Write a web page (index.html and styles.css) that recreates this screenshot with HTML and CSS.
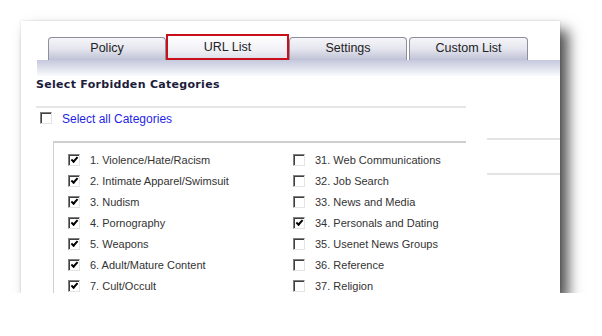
FILE: index.html
```html
<!DOCTYPE html>
<html lang="en">
<head>
    <meta charset="UTF-8">
    <title>URL List</title>
    <link rel="stylesheet" href="styles.css">
</head>
<body>

    <div class="card">
        <div class="tabs">
            <div class="tab">Policy</div>
            <div class="tab active">URL List</div>
            <div class="tab">Settings</div>
            <div class="tab tab-last">Custom List</div>
        </div>
        <div class="strip"></div>

        <div class="body">
            <div class="panel">
                <h2>Select Forbidden Categories</h2>
                <div class="rule"></div>
                <div class="select-all">
                    <span class="cb"></span>
                    <a href="#">Select all Categories</a>
                </div>

                <div class="catbox">
                    <div class="cat"><span class="cb on"></span>1. Violence/Hate/Racism</div>
                    <div class="cat"><span class="cb"></span>31. Web Communications</div>
                    <div class="cat"><span class="cb on"></span>2. Intimate Apparel/Swimsuit</div>
                    <div class="cat"><span class="cb"></span>32. Job Search</div>
                    <div class="cat"><span class="cb on"></span>3. Nudism</div>
                    <div class="cat"><span class="cb"></span>33. News and Media</div>
                    <div class="cat"><span class="cb on"></span>4. Pornography</div>
                    <div class="cat"><span class="cb on"></span>34. Personals and Dating</div>
                    <div class="cat"><span class="cb on"></span>5. Weapons</div>
                    <div class="cat"><span class="cb"></span>35. Usenet News Groups</div>
                    <div class="cat"><span class="cb on"></span>6. Adult/Mature Content</div>
                    <div class="cat"><span class="cb"></span>36. Reference</div>
                    <div class="cat"><span class="cb on"></span>7. Cult/Occult</div>
                    <div class="cat"><span class="cb"></span>37. Religion</div>
                </div>
            </div>

            <div class="side">
                <div class="side-line"></div>
                <div class="side-line"></div>
            </div>
        </div>
    </div>

</body>
</html>
```

FILE: styles.css
```css
body {
    margin: 0;
    padding: 21px 0 0 21px;
    background-color: #fff;
    font-family: 'Liberation Sans', Arial, sans-serif;
}
.card {
    width: 539px;
    height: 272px;
    overflow: hidden;
    background-color: #fff;
    box-shadow: 0 0 2px rgba(0, 0, 0, 0.15), 8px 9px 13px rgba(0, 0, 0, 0.7);
}

/* tab row */
.tabs {
    display: flex;
    align-items: flex-end;
    height: 26px;
    padding: 13px 0 0 27px;
}
.tab {
    box-sizing: border-box;
    width: 118px;
    height: 23px;
    line-height: 20px;
    text-align: center;
    font-size: 12.5px;
    color: #222;
    border: 1px solid #8e8e9c;
    border-bottom: none;
    border-radius: 4px 4px 0 0;
    background: linear-gradient(#f6f6f9, #e4e5ee 50%, #bfc2d6);
}
.tab.active {
    width: 123px;
    height: 26px;
    line-height: 22px;
    border: 2px solid #c8101a;
    border-radius: 0;
    background: linear-gradient(#fff, #f2f2f7 60%, #dfe0ea);
}
.tab-last {
    width: 119px;
    margin-left: 2px;
}
.strip {
    margin-left: 16px;
    height: 16px;
    background: linear-gradient(#c5c8dd, #dfe1ec 50%, #fafbfd);
}

/* main area */
.body {
    display: flex;
}
.panel {
    width: 430px;
    margin-left: 15px;
}
h2 {
    margin: 0;
    height: 17px;
    line-height: 17px;
    font-family: 'DejaVu Sans', Verdana, sans-serif;
    font-size: 11px;
    font-weight: bold;
    color: #1c1c3c;
    letter-spacing: 0.3px;
}
.rule {
    margin-top: 13px;
    border-top: 2px solid #e6e6e6;
}
.select-all {
    display: flex;
    align-items: center;
    height: 18px;
    padding: 2px 0 0 4px;
}
.select-all .cb {
    margin-top: -3px;
}
.select-all a {
    margin-left: 10px;
    font-size: 12px;
    color: #1f1fe6;
    text-decoration: none;
}
.catbox {
    margin: 13px 0 0 17px;
    height: 200px;
    padding: 6px 0 0 14px;
    border-top: 2px solid #cfcfcf;
    border-left: 1px solid #cfcfcf;
    display: grid;
    grid-template-columns: 225px auto;
    grid-auto-rows: 21px;
    align-content: start;
}
.cat {
    display: flex;
    align-items: center;
    font-size: 11px;
    color: #333;
}
.cat .cb {
    margin-right: 10px;
}

/* classic sunken checkbox */
.cb {
    box-sizing: border-box;
    flex: none;
    width: 12px;
    height: 12px;
    border: 1px solid;
    border-color: #808080 #e4e4e4 #e4e4e4 #808080;
    box-shadow: inset 1px 1px 0 #404040;
    background-color: #fff;
    position: relative;
}
.cb.on::after {
    content: "";
    position: absolute;
    left: 2px;
    top: 0px;
    width: 5px;
    height: 2px;
    border-left: 2px solid #000;
    border-bottom: 2px solid #000;
    transform: translate(0, 2px) rotate(-48deg);
}

/* faint lines of the panel behind */
.side {
    flex: 1;
    margin-left: 21px;
    padding-top: 62px;
}
.side-line {
    height: 2px;
    background-color: #e3e3e3;
    margin-bottom: 33px;
}
```
